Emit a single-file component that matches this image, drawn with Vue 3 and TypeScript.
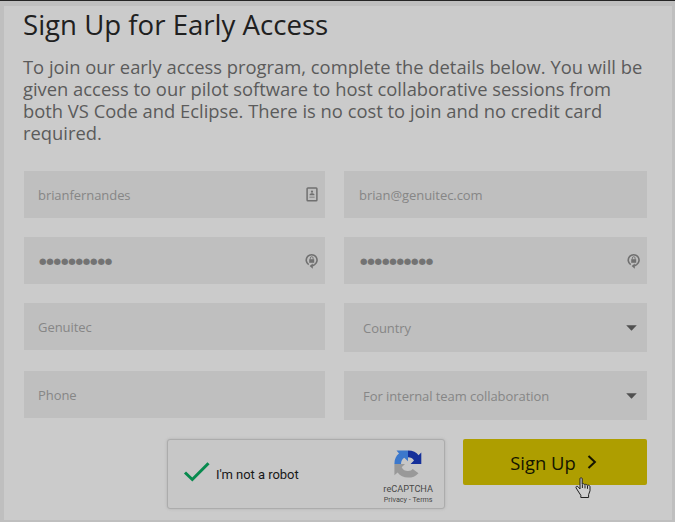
<script setup lang="ts">
interface Field {
  id: string
  text: string
  kind: 'text' | 'password' | 'select'
  icon?: 'contact' | 'lock'
}

const fields: Field[] = [
  { id: 'username', text: 'brianfernandes', kind: 'text', icon: 'contact' },
  { id: 'email', text: 'brian@genuitec.com', kind: 'text' },
  { id: 'password', text: '●●●●●●●●●●', kind: 'password', icon: 'lock' },
  { id: 'confirm', text: '●●●●●●●●●●', kind: 'password', icon: 'lock' },
  { id: 'company', text: 'Genuitec', kind: 'text' },
  { id: 'country', text: 'Country', kind: 'select' },
  { id: 'phone', text: 'Phone', kind: 'text' },
  { id: 'usage', text: 'For internal team collaboration', kind: 'select' },
]
</script>

<template>
  <div class="page">
    <main class="panel">
      <h1 class="title"><span>Sign Up for Early Access</span></h1>
      <p class="intro">
        To join our early access program, complete the details below. You will be<br />
        given access to our pilot software to host collaborative sessions from<br />
        both VS Code and Eclipse. There is no cost to join and no credit card<br />
        required.
      </p>
      <form class="form" @submit.prevent>
        <div class="fields">
          <div v-for="f in fields" :key="f.id" class="field" :class="f.kind">
            <span class="value">{{ f.text }}</span>
            <svg v-if="f.icon === 'contact'" class="icon" width="12" height="15" viewBox="0 0 12 15">
              <rect x="1.1" y="1" width="9.8" height="12.8" rx="0.8" fill="none" stroke="#707070" stroke-width="1.5" />
              <circle cx="6" cy="4.7" r="1.1" fill="#707070" />
              <path d="M3.6 8.2V7.2L5 6.2h2l1.4 1v1z" fill="#707070" />
              <path d="M3.4 10.2h5.2" stroke="#8c8c8c" stroke-width="1.2" />
            </svg>
            <svg v-else-if="f.icon === 'lock'" class="icon" width="13" height="16" viewBox="0 0 13 16">
              <path d="M3.7 11.6A5.4 5.4 0 1 1 9.6 11.6L7.4 12.9" fill="none" stroke="#707070" stroke-width="1.6" />
              <path d="M7.8 10.4v5.4L4.6 13.1z" fill="#707070" />
              <rect x="4.2" y="6.2" width="5" height="3.6" fill="#707070" />
              <path d="M5.3 6.4V5.1a1.4 1.4 0 0 1 2.8 0v1.3" fill="none" stroke="#707070" stroke-width="0.9" />
            </svg>
            <svg v-else-if="f.kind === 'select'" class="caret" width="11" height="6" viewBox="0 0 11 6">
              <path d="M0.2 0.2h10.6L5.5 5.8z" fill="#505050" />
            </svg>
          </div>
        </div>
        <div class="actions">
          <div class="captcha">
            <svg class="check" width="28" height="22" viewBox="0 0 28 22">
              <path d="M2 11.5L9.3 18.5L25.5 2.2" fill="none" stroke="#078a4e" stroke-width="3" />
            </svg>
            <span class="robot">I'm not a robot</span>
            <div class="brand">
              <svg width="28" height="28" viewBox="0 0 28 28">
                <path d="M14 0.5C19 0.5 22.5 2.5 24.5 5.2L27.3 2.5V14H16.5L20 10.4C18.7 8.3 16.7 7.2 14 7.2z" fill="#15309a" />
                <path d="M0.4 14C0.4 9 2.2 5.6 5 3.5L2.5 0.5H14V11.3L10.3 7.7C8.3 9 7 11 7 14z" fill="#3c78cc" />
                <path d="M0.4 14H11L7.7 17.2C9 20 11.2 21 14 21C16.5 21 17.7 20.2 18.7 19L24.5 23.2C21.5 26.5 18.5 27.6 14 27.6C9.7 27.6 6 25.7 3.6 22.5L0.4 25.3z" fill="#999" />
              </svg>
              <span class="name">reCAPTCHA</span>
              <span class="legal">Privacy - Terms</span>
            </div>
          </div>
          <button class="submit" type="submit">
            <span>Sign Up</span>
            <svg width="10" height="14" viewBox="0 0 10 14">
              <path d="M1.5 1L7.9 7L1.5 13" fill="none" stroke="#151500" stroke-width="2" />
            </svg>
          </button>
        </div>
      </form>
    </main>
    <svg class="cursor" width="17" height="22" viewBox="0 0 17 22">
      <path
        d="M5 1.7C5 0.4 7 0.4 7.2 1.7V7.2C7.8 6.4 9.4 6.7 9.7 7.7C10.4 7 11.8 7.3 12.2 8.4C13 7.8 14.8 8.2 15 9.6V13.8L13.6 17.6V20.5H5.8V18.3L3 14L1 10.8C0.7 9.3 2 8.8 3 9.7L5 12z"
        fill="#cecece" stroke="#202020" stroke-width="1"
      />
      <path d="M7.4 7.5V11M10 8.2V11.4M12.5 9V11.8" stroke="#202020" stroke-width="1" />
    </svg>
  </div>
</template>

<style>
body {
  margin: 0;
  background: #bfbfbf;
}
</style>

<style scoped>
.page {
  position: relative;
  box-sizing: border-box;
  width: 675px;
  height: 522px;
  padding: 5px 3px 2px 4px;
  border-top: 1px solid #252525;
  background: #bfbfbf;
  font-family: 'Open Sans', 'Noto Sans', sans-serif;
  overflow: hidden;
}
.panel {
  box-sizing: border-box;
  height: 514px;
  padding: 0 25px 0 19px;
  background: #cbcbcb;
}
.title {
  margin: 0;
  height: 50px;
  font-size: 27.6px;
  font-weight: 400;
  line-height: 36px;
  color: #202020;
  white-space: nowrap;
}
.intro {
  margin: 0;
  height: 115px;
  font-size: 18.38px;
  line-height: 22px;
  color: #5b5b5b;
  white-space: nowrap;
}
.fields {
  display: grid;
  grid-template-columns: 301px 303px;
  grid-template-rows: 47px 47px 49px 49px;
  gap: 19px;
  padding-left: 1px;
}
.field {
  display: flex;
  align-items: center;
  justify-content: space-between;
  box-sizing: border-box;
  height: 47px;
  padding: 0 7px 0 14px;
  background: #bfbfbf;
  font-size: 13px;
  letter-spacing: -0.06px;
  color: #868686;
  white-space: nowrap;
}
.field:nth-child(even) {
  padding-left: 15px;
}
.field.select {
  height: 49px;
  padding: 0 10px 0 19px;
}
.password .value {
  padding: 0 0 0 1px;
  font-family: 'DejaVu Sans', sans-serif;
  font-size: 8.6px;
  letter-spacing: -0.2px;
  color: #737373;
}
.actions {
  display: flex;
  justify-content: space-between;
  align-items: flex-start;
  padding: 19px 0 0 144px;
}
.captcha {
  display: flex;
  align-items: center;
  box-sizing: border-box;
  width: 278px;
  height: 70px;
  padding: 0 11px 0 15px;
  border: 1px solid #acacac;
  border-radius: 3px;
  background: #c7c7c7;
  box-shadow: 0 0 3px #b0b0b0;
}
.check {
  margin-top: -4px;
}
.robot {
  margin-left: 5px;
  font-family: Roboto, sans-serif;
  font-size: 13px;
  letter-spacing: -0.05px;
  color: #181818;
}
.brand {
  display: flex;
  flex-direction: column;
  align-items: center;
  margin-left: auto;
  padding-top: 5px;
  font-family: Roboto, sans-serif;
  color: #484848;
  white-space: nowrap;
}
.name {
  margin-top: 5px;
  font-size: 9.2px;
  line-height: 12px;
}
.legal {
  font-size: 7.2px;
  line-height: 9px;
}
.submit {
  display: flex;
  align-items: center;
  justify-content: center;
  gap: 11px;
  width: 184px;
  height: 46px;
  padding: 0 3px 0 0;
  border: 0;
  border-radius: 2px;
  background: #ae9e00;
  font-family: inherit;
  font-size: 18.4px;
  color: #151500;
}
.cursor {
  position: absolute;
  left: 575px;
  top: 476px;
}
</style>
